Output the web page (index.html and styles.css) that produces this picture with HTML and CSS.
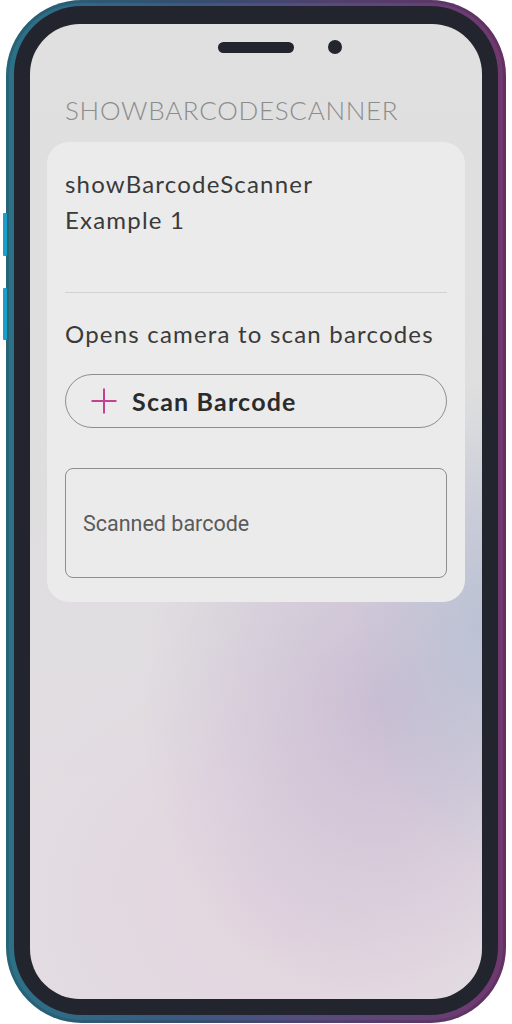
FILE: index.html
```html
<!DOCTYPE html>
<html>
<head>
<meta charset="utf-8">
<link rel="stylesheet" href="styles.css">
</head>
<body>
<div class="phone">
  <div class="side-btn side-btn-1"></div>
  <div class="side-btn side-btn-2"></div>
  <div class="bezel">
    <div class="screen">
      <div class="notch">
        <div class="speaker"></div>
        <div class="camera"></div>
      </div>
      <div class="header">SHOWBARCODESCANNER</div>
      <div class="card">
        <div class="card-title">showBarcodeScanner<br>Example 1</div>
        <div class="divider"></div>
        <div class="card-desc">Opens camera to scan barcodes</div>
        <button class="scan-btn">
          <svg class="plus" width="26" height="26" viewBox="0 0 26 26"><line x1="13" y1="0.5" x2="13" y2="25.5"/><line x1="0.5" y1="13" x2="25.5" y2="13"/></svg>
          <span>Scan Barcode</span>
        </button>
        <div class="field"><span>Scanned barcode</span></div>
      </div>
    </div>
  </div>
</div>
</body>
</html>
```

FILE: styles.css
```css
html, body {
  margin: 0;
  padding: 0;
  background: #ffffff;
}
body {
  width: 512px;
  height: 1024px;
  overflow: hidden;
}
.phone {
  position: relative;
  margin-left: 6px;
  width: 500px;
  height: 1023px;
  box-sizing: border-box;
  padding: 6px 8px 8px 8px;
  border-radius: 76px;
  background: linear-gradient(90deg, #2c7287 0%, #3a5a80 35%, #5a4a7c 65%, #70386f 100%);
  box-shadow: inset 0 0 0 3px rgba(0,0,0,0.12);
}
.side-btn {
  position: absolute;
  left: -3px;
  width: 4px;
  background: #1b9fc8;
  border-radius: 1px;
}
.side-btn-1 { top: 213px; height: 43px; }
.side-btn-2 { top: 288px; height: 52px; }
.bezel {
  height: 100%;
  box-sizing: border-box;
  padding: 18px 16px 16px 16px;
  border-radius: 68px;
  background: #22252d;
}
.screen {
  position: relative;
  height: 100%;
  box-sizing: border-box;
  border-radius: 50px;
  overflow: hidden;
  padding: 71px 17px 0 17px;
  font-family: "Lato", "Noto Sans", sans-serif;
  background:
    radial-gradient(ellipse 130px 240px at 452px 600px, rgba(178,190,210,0.75), rgba(178,190,210,0) 100%),
    radial-gradient(ellipse 240px 300px at 350px 680px, rgba(200,186,210,0.9), rgba(200,186,210,0) 100%),
    radial-gradient(ellipse 300px 260px at 250px 880px, rgba(226,210,222,0.8), rgba(226,210,222,0) 100%),
    linear-gradient(180deg, #e0e0e0 0%, #dedede 45%, #e2dde2 75%, #e3dde2 100%);
}
.notch {
  position: absolute;
  top: 18px;
  left: 0;
  right: 0;
  display: flex;
  justify-content: center;
}
.speaker {
  width: 76px;
  height: 11px;
  border-radius: 6px;
  background: #22252d;
}
.camera {
  position: absolute;
  left: 298px;
  top: -2px;
  width: 14px;
  height: 14px;
  border-radius: 50%;
  background: #22252d;
}
.header {
  padding-left: 18px;
  font-size: 26px;
  line-height: 30px;
  font-weight: 300;
  color: #8c8c8c;
  letter-spacing: 0.7px;
}
.card {
  margin-top: 17px;
  background: #ebebeb;
  border-radius: 22px;
  padding: 24px 18px 24px 18px;
}
.card-title, .card-desc {
  font-size: 24px;
  line-height: 36px;
  color: #3a3a3a;
  font-weight: 400;
  letter-spacing: 1.2px;
}
.divider {
  margin-top: 54px;
  height: 1px;
  background: #d2d2d2;
}
.card-desc {
  margin-top: 23px;
}
.scan-btn {
  margin-top: 22px;
  width: 100%;
  height: 54px;
  box-sizing: border-box;
  border: 1px solid #8e8e8e;
  border-radius: 27px;
  background: transparent;
  display: flex;
  align-items: center;
  padding: 0 0 0 25px;
  gap: 15px;
  font-family: "Lato", "Noto Sans", sans-serif;
  font-size: 25px;
  font-weight: 700;
  letter-spacing: 1.2px;
  color: #2b2b2b;
}
.plus {
  stroke: #c2428f;
  stroke-width: 2;
  flex: none;
}
.field {
  margin-top: 40px;
  height: 110px;
  box-sizing: border-box;
  border: 1px solid #8e8e8e;
  border-radius: 8px;
  display: flex;
  align-items: center;
  padding-left: 17px;
  font-family: "Roboto", sans-serif;
  font-size: 21.5px;
  color: #5a5a5a;
}
```
